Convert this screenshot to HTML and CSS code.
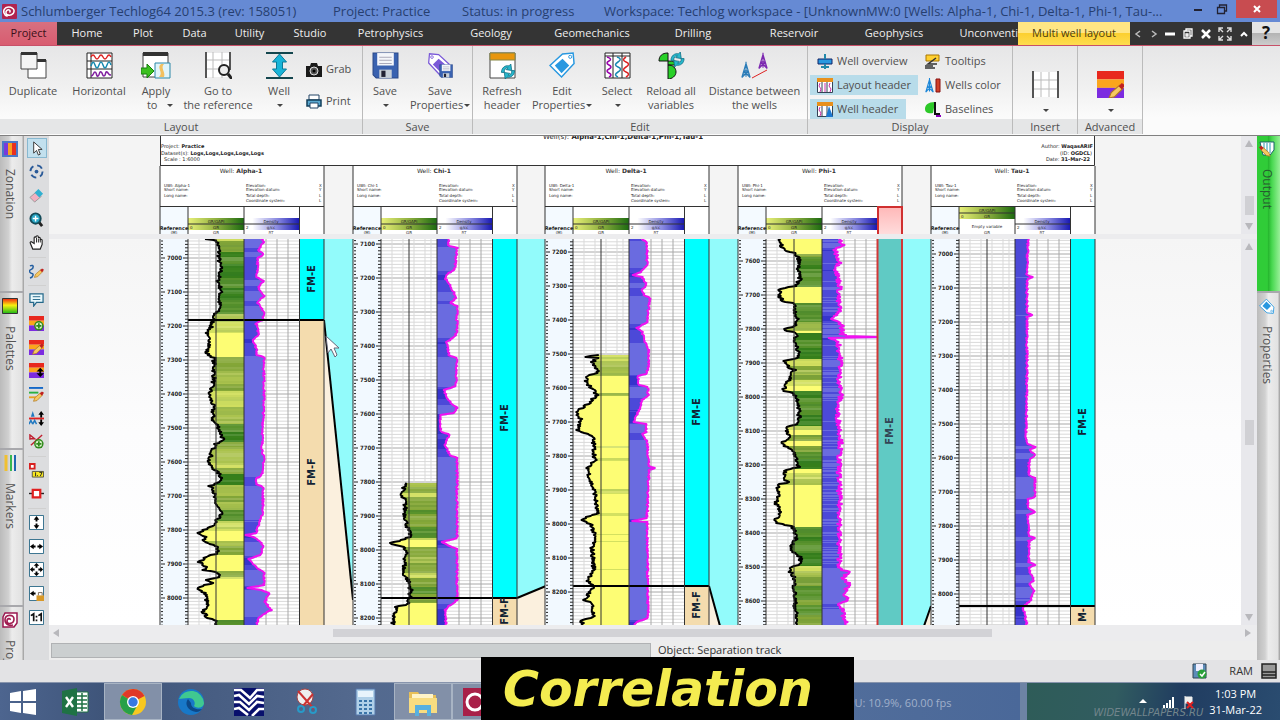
FILE: index.html
```html
<!DOCTYPE html>
<html lang="en">
<head>
<meta charset="utf-8">
<title>Techlog - Multi well layout</title>
<link rel="stylesheet" href="styles.css">
</head>
<body>
<svg class="defs" aria-hidden="true">
  <symbol id="zones" viewBox="0 0 16 16"><path d="M0 0h16v5H0z" fill="#e8281e"/><path d="M0 5h16v5H0z" fill="#fba51c"/><path d="M0 10h16v6H0z" fill="#7c2be0"/></symbol>
  <symbol id="pencil" viewBox="0 0 16 16"><path d="M1 15l2-5 8-7 3 3-8 8z" fill="#f6c860" stroke="#b07820"/><path d="M10 4l3-3 3 2-3 4z" fill="#c02020"/></symbol>
  <symbol id="plus" viewBox="0 0 12 12"><circle cx="6" cy="6" r="5.5" fill="#2f8a1c"/><circle cx="6" cy="6" r="3.8" fill="#d8f0c8"/><path d="M6 3v6M3 6h6" stroke="#2f8a1c" stroke-width="2"/></symbol>
  <symbol id="sync" viewBox="0 0 16 16"><path d="M1 9c0-5 4-8 8-7l2-2 1 7-6-1 2-2C5 4 4 6 4 9zM15 7c0 5-4 8-8 7l-2 2-1-7 6 1-2 2c3 0 4-2 4-5z" fill="#28b8cc" stroke="#0a6a80" stroke-width=".8"/></symbol>
  <symbol id="disk" viewBox="0 0 26 26"><path d="M1 1h24v24H4l-3-3z" fill="#3a62b0" stroke="#2a4888"/><path d="M5 1h16v12H5z" fill="#f4f6fa"/><path d="M7 5h12M7 8h12M7 11h12" stroke="#aab"/><path d="M7 17h12v8H7z" fill="#c8d0d8"/><path d="M9 18h4v6H9z" fill="#223"/></symbol>
  <symbol id="tag" viewBox="0 0 28 28"><path d="M1 14L14 2l11-1 1 11-13 14z" fill="#fff" stroke="currentColor" stroke-width="1.5"/><path d="M6 14l8-7 7 7-8 8z" fill="currentColor"/><circle cx="22" cy="5" r="1.6" fill="none" stroke="currentColor"/></symbol>
  <symbol id="derrick" viewBox="0 0 12 20"><path d="M6 0v18M6 2L1 19M6 2l5 17M3 11h6M2 15h8M4 7h4M1 19l8-8M11 19l-8-8" stroke="currentColor" stroke-width="1.4" fill="none"/></symbol>
  <symbol id="spiral" viewBox="0 0 16 16"><path d="M1 5L3 1h12v10l-3 4H1z" fill="#fff" stroke="#9a1850" stroke-width="1.5"/><path d="M8 8c1-2-3-2-3 1 0 4 7 3 7-2 0-5-9-5-9 1 0 5 5 6 8 5" fill="none" stroke="#a01c50" stroke-width="1.6"/></symbol>
  <symbol id="fit" viewBox="0 0 16 16"><path d="M.5.5h15v15H.5z" fill="#fff" stroke="#2c6a88"/></symbol>
</svg>

<div class="app">
  <header class="titlebar">
    <svg class="logo" viewBox="0 0 16 16"><rect width="16" height="16" rx="1" fill="#b02450"/><path d="M8 9c2-2-1-4-3-2-3 4 3 7 7 3 3-5-3-8-8-6-4 3-2 8 2 9" fill="none" stroke="#fff" stroke-width="1.6"/></svg>
    <span class="t-app">Schlumberger Techlog64 2015.3 (rev: 158051)</span>
    <span class="t-project">Project: Practice</span>
    <span class="t-status">Status: in progress</span>
    <span class="t-work">Workspace: Techlog workspace - [UnknownMW:0 [Wells: Alpha-1, Chi-1, Delta-1, Phi-1, Tau-...</span>
    <div class="winbtns">
      <button aria-label="Minimize"><svg width="12" height="12"><path d="M2 7h8" stroke="#223" stroke-width="2"/></svg></button>
      <button aria-label="Restore"><svg width="12" height="12"><path d="M1.500 4.500h7v6h-7zM3.500 4v-2h7v6h-2" fill="none" stroke="#223" stroke-width="1.300"/></svg></button>
      <button class="close" aria-label="Close"><svg width="10" height="10"><path d="M2 2l6 6M8 2L2 8" stroke="#fff" stroke-width="2"/></svg></button>
    </div>
  </header>

  <nav class="menu">
    <button class="project">Project</button><button>Home</button><button>Plot</button><button>Data</button><button>Utility</button><button>Studio</button><button>Petrophysics</button><button>Geology</button><button>Geomechanics</button><button>Drilling</button><button>Reservoir</button><button>Geophysics</button><button class="cut">Unconventi</button><button class="current">Multi well layout</button>
    <div class="mdi">
      <button aria-label="Previous tab"><svg width="8" height="10"><path d="M6 2L2 5l4 3" stroke="#bbb" stroke-width="1.500" fill="none"/></svg></button>
      <button aria-label="Next tab"><svg width="8" height="10"><path d="M2 2l4 3-4 3" stroke="#bbb" stroke-width="1.500" fill="none"/></svg></button>
      <button aria-label="Minimize view"><svg width="10" height="10"><path d="M0 5h10" stroke="#fff" stroke-width="3"/></svg></button>
      <button aria-label="Restore view"><svg width="10" height="11"><path d="M1 3h6v7H1zM3 3V1h6v7H7M3 6h2v2H3z" stroke="#fff" stroke-width="1.300" fill="none"/></svg></button>
      <button aria-label="Close view"><svg width="10" height="10"><path d="M1 1l8 8M9 1L1 9" stroke="#fff" stroke-width="2.500"/></svg></button>
      <button aria-label="Full screen"><svg width="14" height="14"><path d="M1 5V1h4M1 1l4 4M9 1h4v4M13 1L9 5M1 9v4h4M1 13l4-4M13 9v4H9M13 13L9 9" stroke="#ddd" stroke-width="1.400" fill="none"/></svg></button>
      <button aria-label="Collapse ribbon"><svg width="8" height="8"><path d="M1 6l3-3 3 3" stroke="#fff" stroke-width="2" fill="none"/></svg></button>
    </div>
    <button class="help" aria-label="Help">?</button>
  </nav>

  <section class="ribbon">
    <div class="group"><div class="tools g-layout">
      <button><svg viewBox="0 0 27 27"><path d="M8 8h18v18H8z" fill="#fff" stroke="#444"/><path d="M8 7h18v3H8z" fill="#333"/><path d="M1 1h16v16H1z" fill="#f4f4f4" stroke="#444"/><path d="M1 0h16v3H1z" fill="#333"/></svg>Duplicate</button>
      <button><svg viewBox="0 0 27 27"><path d="M1 1h25v25H1zM5 1v25M1 9h25M1 17h25" fill="#fff" stroke="#222"/><path d="M5 5q2-4 4 0t4 0 4 0 4 0 4 0" fill="none" stroke="#d22" stroke-width="1.400"/><path d="M5 14q2-7 4-1t4 0 4 0 4 0 4 0" fill="none" stroke="#178ab0" stroke-width="1.500"/><path d="M5 24c3 0 2-4 4-4s1 5 3 4 1-5 3-4 1 4 3 4 1-5 3-4 1 3 4 3" fill="none" stroke="#8020a0" stroke-width="1.500"/></svg>Horizontal</button>
      <button><svg viewBox="0 0 30 27"><path d="M2 1h25v24H2z" fill="#fff" stroke="#444"/><path d="M2 0h25v4H2z" fill="#333"/><path d="M14 11h15v15H14z" fill="#e0f4fa" stroke="#2c88a8"/><path d="M20 12c-5 4 3 8-2 13h5c2-5-4-9 0-13z" fill="#f2c060"/><path d="M0 16h6v-4l7 7-7 7v-4H0z" fill="#3cc020" stroke="#188010"/></svg>Apply<br><span class="shift">to &nbsp; <i></i></span></button>
      <button><svg viewBox="0 0 27 27"><path d="M1 1h24v24H1z" fill="#fff"/><path d="M8 0v26M17 0v26M1 8h25M1 17h25" stroke="#bbb"/><path d="M1 0v26M25 0v18" stroke="#555" stroke-width="2"/><circle cx="19" cy="18" r="5" fill="#eee" stroke="#222" stroke-width="2"/><path d="M23 22l4 5" stroke="#222" stroke-width="3"/></svg>Go to<br>the reference</button>
      <button><svg viewBox="0 0 27 27"><path d="M0 1h27M0 26h27" stroke="#14464e" stroke-width="2"/><path d="M13.500 2l7 8h-4v7h4l-7 8-7-8h4v-7h-4z" fill="#18b4d8" stroke="#0a7a98"/></svg>Well<br><span><i></i></span></button>
      <div class="stack2">
        <button><svg viewBox="0 0 16 15"><path d="M0 4h4l1-3h6l1 3h4v11H0z" fill="#1a1a1a"/><circle cx="8" cy="9" r="4" fill="#555" stroke="#ddd"/><circle cx="8" cy="9" r="1.500"/></svg>Grab</button>
        <button><svg viewBox="0 0 16 15"><path d="M3 1h10v5H3z" fill="#fff" stroke="#246"/><path d="M1 6h14v6H1z" fill="#5aa8d0" stroke="#123e5a" stroke-width="1.500"/><path d="M4 9h8v5H4z" fill="#fff" stroke="#246"/></svg>Print</button>
      </div>
    </div><h2>Layout</h2></div>
    <div class="group"><div class="tools g-save">
      <button><svg><use href="#disk"/></svg>Save<br><span><i></i></span></button>
      <button><svg viewBox="0 0 29 27"><use href="#tag" width="25" height="25" color="#7a58d8" transform="matrix(-1 0 0 1 25 0)"/><use href="#disk" x="13" y="12" width="15" height="15"/></svg>Save<br><span>Properties<i></i></span></button>
    </div><h2>Save</h2></div>
    <div class="group"><div class="tools g-edit">
      <button><svg viewBox="0 0 27 27"><path d="M1 1h25v25H1z" fill="#fff" stroke="#444"/><path d="M1 1h25v7H1z" fill="#e8960c" stroke="#884"/><use href="#sync" x="11" y="12" width="16" height="15"/></svg>Refresh<br>header</button>
      <button class="blue"><svg><use href="#tag"/></svg>Edit<br><span>Properties<i></i></span></button>
      <button><svg viewBox="0 0 27 27"><path d="M1 1h25v25H1zM1 4h25M9 1v25M18 1v25" fill="#fff" stroke="#222"/><g fill="none" stroke-width="1.500"><path d="M3 5q6 2 2 4t0 4 0 4 0 4 0 4" stroke="#90a"/><path d="M13 5q6 2 1 5t0 5 0 5 0 5" stroke="#178ab0"/><path d="M22 5q-5 3 0 5t0 5 0 5 0 5" stroke="#d22"/></g></svg>Select<br><span><i></i></span></button>
      <button><svg viewBox="0 0 27 27"><path d="M10 1C4 1 1 4 1 9h9zM10 9v4h8c0-3-3-4-8-4zM10 13c5 0 8 3 8 7s-4 7-8 7z" fill="#28d028" stroke="#111"/><use href="#sync" x="11" y="0" width="17" height="15"/></svg>Reload all<br>variables</button>
      <button><svg viewBox="0 0 27 27"><use href="#derrick" x="0" y="9" width="10" height="18" color="#2a7cb8"/><use href="#derrick" x="17" y="0" width="10" height="18" color="#7c28b0"/><path d="M11 26l15-8" stroke="#d22"/></svg>Distance between<br>the wells</button>
    </div><h2>Edit</h2></div>
    <div class="group"><div class="tools g-display">
      <button><svg viewBox="0 0 16 15"><path d="M1 5h14v5H1z" fill="#2898e0" stroke="#126"/><path d="M8 0v5M8 10v5M4 13h8" stroke="#28a" stroke-width="2"/></svg>Well overview</button>
      <button><svg viewBox="0 0 16 15"><path d="M1 1h13v6H1z" fill="#ffd030" stroke="#a70"/><path d="M11 4L3 10h9M0 12h8M0 14h10" stroke="#333" fill="none" stroke-width="1.500"/></svg>Tooltips</button>
      <button class="on"><svg viewBox="0 0 16 15"><path d="M.5.500h15v14H.5zM5 4v11M10 4v11" fill="#fff" stroke="#345"/><path d="M0 0h16v4H0z" fill="#e8901c"/><path d="M3 5l-1 3 2 3-1 3M8 5v9M13 5l-1 3 2 3-1 3" stroke="#c3a" fill="none"/></svg>Layout header</button>
      <button><svg viewBox="0 0 16 15"><use href="#derrick" width="9" height="15" color="#1b86d8"/><path d="M11 1h4v13h-4z" fill="#d04028" stroke="#811"/></svg>Wells color</button>
      <button class="on w2"><svg viewBox="0 0 16 15"><path d="M.5.500h15v14H.5zM5 4v11M10 4v11" fill="#fff" stroke="#345"/><path d="M0 0h16v4H0z" fill="#e8901c"/><path d="M3 5l-1 3 2 3-1 3" stroke="#c3a" fill="none"/><path d="M12 4l4 11H9z" fill="#1b78d0"/></svg>Well header</button>
      <button><svg viewBox="0 0 16 15"><path d="M10 0C3 0 0 3 0 7s4 5 8 4z" fill="#2cc828"/><path d="M10 0v12h5" stroke="#111" stroke-width="2" fill="none"/><path d="M11 13h5v2h-5z" fill="#80b"/></svg>Baselines</button>
    </div><h2>Display</h2></div>
    <div class="group"><div class="tools g-one"><button aria-label="Insert track"><svg viewBox="0 0 27 27"><path d="M1 1h25v25H1z" fill="#fff"/><path d="M9 1v25M17 1v25M1 9h25M1 18h25" stroke="#bbb"/><path d="M1 0v27M26 0v27" stroke="#555" stroke-width="2"/></svg><span><i></i></span></button></div><h2>Insert</h2></div>
    <div class="group"><div class="tools g-one"><button aria-label="Advanced zones"><svg viewBox="0 0 27 27"><use href="#zones" width="27" height="27"/><use href="#pencil" x="11" y="11" width="17" height="17"/></svg><span><i></i></span></button></div><h2>Advanced</h2></div>
  </section>

  <main class="work">
    <aside class="tabs left">
      <button><svg viewBox="0 0 16 16"><path d="M0 0h16v16H0z" fill="#4a78c8"/><path d="M2 2h12v12H2z" fill="#fff"/><path d="M2 2h4v12H2z" fill="#7a3ad8"/><path d="M6 2h4v12H6z" fill="#f8a020"/><path d="M10 2h4v12h-4z" fill="#e83020"/></svg>Zonation</button>
      <button><svg viewBox="0 0 16 16"><defs><linearGradient id="pal" x2="0" y2="1"><stop stop-color="#f02010"/><stop offset=".45" stop-color="#f8f010"/><stop offset="1" stop-color="#18b818"/></linearGradient></defs><path d="M.5.500h15v15H.5z" fill="url(#pal)" stroke="#333"/></svg>Palettes</button>
      <button><svg viewBox="0 0 16 16"><path d="M4 0v16" stroke="#f0c030" stroke-width="3"/><path d="M9 0v16" stroke="#38b850" stroke-width="2"/><path d="M13 0v16" stroke="#2068b0" stroke-width="2"/></svg>Markers</button>
      <button class="rest"><svg><use href="#spiral"/></svg>Proj</button>
    </aside>

    <div class="toolbar" role="toolbar">
      <button class="active" aria-label="Select"><svg viewBox="0 0 16 16"><path d="M5 1v12l3-3 2 5 2-1-2-5h4z" fill="#fff" stroke="#333"/></svg></button>
      <button aria-label="Target"><svg viewBox="0 0 16 16"><circle cx="8" cy="8" r="6.500" fill="none" stroke="#2a5a98" stroke-width="2" stroke-dasharray="6 4.200"/><circle cx="8" cy="8" r="2" fill="#2a5a98"/></svg></button>
      <button aria-label="Erase"><svg viewBox="0 0 16 16"><path d="M1 10l7-6 5 5-7 6z" fill="#f0b0c0" stroke="#999"/><path d="M6 5l4-4 5 5-4 4z" fill="#30b0d0"/></svg></button>
      <button aria-label="Zoom"><svg viewBox="0 0 16 16"><path d="M10 10l4 5" stroke="#222" stroke-width="3"/><circle cx="7" cy="7" r="5.500" fill="#28a8c8" stroke="#134a58" stroke-width="2"/><path d="M7 4v6M4 7h6" stroke="#fff" stroke-width="1.500"/></svg></button>
      <button aria-label="Pan"><svg viewBox="0 0 16 16"><path d="M4 15h8l2-5V5.500a1 1 0 0 0-2 0V3.500a1 1 0 0 0-2 0V2a1 1 0 0 0-2.500 0V3a1 1 0 0 0-2 0v6L3 7.500a1 1 0 0 0-1.500 1.500z" fill="#fff" stroke="#222" stroke-width="1.200"/><path d="M8 3v5M10 4v4M12 5v3" stroke="#222"/></svg></button>
      <hr>
      <button aria-label="Edit curve"><svg viewBox="0 0 16 16"><path d="M1 2c5-2 4 3 1 4s-1 4 1 4 2 4-2 5" fill="none" stroke="#235ea0" stroke-width="1.600"/><use href="#pencil" x="5" y="4" width="11" height="11"/></svg></button>
      <hr>
      <button aria-label="Comment"><svg viewBox="0 0 16 16"><path d="M1 2h14v9H8l-3 4v-4H1z" fill="#e8f8fc" stroke="#24688a" stroke-width="1.300"/><path d="M4 5h8M4 8h8" stroke="#24688a"/></svg></button>
      <button aria-label="Add zone"><svg viewBox="0 0 16 16"><use href="#zones"/><use href="#plus" x="5" y="5" width="11" height="11"/></svg></button>
      <button aria-label="Edit zone"><svg viewBox="0 0 16 16"><use href="#zones"/><use href="#pencil" x="3" y="3" width="13" height="13"/></svg></button>
      <button aria-label="Move zone"><svg viewBox="0 0 16 16"><use href="#zones"/><path d="M12 5l4 4h-3v2h3l-4 4-4-4h3V9H8z"/></svg></button>
      <button aria-label="Edit markers"><svg viewBox="0 0 16 16"><path d="M0 1h15" stroke="#1468c8" stroke-width="2"/><path d="M0 6h10" stroke="#28b040" stroke-width="2"/><path d="M0 11h8" stroke="#e8a020" stroke-width="2"/><use href="#pencil" x="4" y="4" width="12" height="12"/></svg></button>
      <button aria-label="Flatten"><svg viewBox="0 0 16 16"><path d="M0 8h16" stroke="#e02020" stroke-width="2"/><path d="M4 0l2 6H2z" fill="#2078c0"/><path d="M0 14l2-4 2 4M4 14l2-4 2 4" fill="none" stroke="#2078c0" stroke-width="1.500"/><path d="M10 4l3-4 3 4h-2v3h-2V4zM10 12l3 4 3-4h-2v-3h-2v3z"/></svg></button>
      <button aria-label="Add fault"><svg viewBox="0 0 16 16"><path d="M1 6V1l5 4H1M2 12L14 1" stroke="#c02030" stroke-width="1.500" fill="none"/><use href="#plus" x="5" y="5" width="11" height="11"/></svg></button>
      <hr>
      <button aria-label="Show value"><svg viewBox="0 0 16 16"><path d="M1 1h5v5H1z" fill="#fff" stroke="#d82020" stroke-width="2"/><path d="M3.500 9h12v6h-12z" fill="#f8e820" stroke="#554"/><path d="M7 10v4M9 13v1M11 10h3l-2 4" stroke="#222" fill="none"/></svg></button>
      <button aria-label="Node"><svg viewBox="0 0 16 16"><path d="M0 8h16" stroke="#222" stroke-width="1.500"/><path d="M4 4h8v8H4z" fill="#fff" stroke="#e02020" stroke-width="2.400"/></svg></button>
      <hr>
      <button aria-label="Fit height"><svg viewBox="0 0 16 16"><use href="#fit"/><path d="M8 1l3 4H9v2H7V5H5zM8 15l3-4H9V9H7v2H5z"/></svg></button>
      <button aria-label="Fit width"><svg viewBox="0 0 16 16"><use href="#fit"/><path d="M1 8l4-3v2h2v2H5v2zM15 8l-4-3v2H9v2h2v2z"/></svg></button>
      <button aria-label="Fit all"><svg viewBox="0 0 16 16"><use href="#fit"/><path d="M8 1l3 3H9v2H7V4H5zM8 15l3-3H9v-2H7v2H5zM1 8l3-3v2h2v2H4v2zM15 8l-3-3v2h-2v2h2v2z"/></svg></button>
      <button aria-label="Lock fit"><svg viewBox="0 0 16 16"><use href="#fit"/><path d="M1 8l4-3v2h2v2H5v2z"/><path d="M8 10h8v6H8z" fill="#d89828"/><path d="M10 10V7h4v3" fill="none" stroke="#765"/></svg></button>
      <button aria-label="One to one"><svg viewBox="0 0 16 16"><use href="#fit"/><path d="M2 6l3-2v8M10 6l3-2v8M8 6v2M8 10v2" fill="none" stroke="#111" stroke-width="1.800"/></svg></button>
    </div>

    <div class="view">
      <div class="pane head">
        <svg id="heads" role="img" aria-label="Well headers"></svg>
        <div class="vscroll"><b class="up"></b><b class="thumb"></b><b class="down"></b></div>
      </div>
      <div class="pane plot">
        <svg id="logs" role="img" aria-label="Well logs"></svg>
        <div class="vscroll"><b class="up"></b><b class="thumb"></b><b class="down"></b></div>
      </div>
      <div class="hscroll"><b class="lt"></b><b class="thumb"></b><b class="rt"></b></div>
      <div class="info"><div class="progress"></div><span>Object: Separation track</span></div>
    </div>

    <aside class="tabs right">
      <button class="green"><svg viewBox="0 0 16 16"><path d="M1 1h14v8l-4 5H4z" fill="#fff" stroke="#18606a"/><path d="M5 2v8M8 2v10M11 2v10" stroke="#2898b0"/><use href="#pencil" x="0" y="4" width="12" height="12" transform="matrix(-1 0 0 1 12 0)"/></svg>Output</button>
      <button class="rest blue"><svg viewBox="0 0 28 28"><g transform="matrix(1 0 0 -1 0 28)"><use href="#tag"/></g></svg>Properties</button>
    </aside>
  </main>

  <footer class="status">
    <svg width="16" height="16" viewBox="0 0 16 16"><path d="M1 1h13v14H1z" fill="#5c8cb8" stroke="#345"/><path d="M4 1h7v7H4z" fill="#eef"/><circle cx="10" cy="11" r="4.500" fill="#28a038"/><path d="M8 11l2 2 3-4" stroke="#fff" stroke-width="1.500" fill="none"/></svg>
    <span>RAM</span>
    <svg width="16" height="16" viewBox="0 0 16 16"><path d="M1 1h14v14H1zM1 9h14M1 12h14" fill="#999" stroke="#222" stroke-width="1.500"/></svg>
  </footer>

  <div class="taskbar">
    <div class="apps">
      <button aria-label="Start"><svg viewBox="0 0 28 28"><path d="M1 5l11-2v10H1zM14 3l13-2v12H14zM1 15h11v10L1 23zM14 15h13v12l-13-2z" fill="#fff"/></svg></button>
      <button aria-label="Excel"><svg viewBox="0 0 28 28"><path d="M14 4h13v20H14z" fill="#fff" stroke="#1f7244"/><path d="M16 8h10M16 12h10M16 16h10M16 20h10M21 5v18" stroke="#1f7244" stroke-width="1.500"/><path d="M1 3l15-3v28L1 25z" fill="#1f7244"/><path d="M5 9l7 10M12 9L5 19" stroke="#fff" stroke-width="2.400"/></svg></button>
      <button class="open" aria-label="Chrome"><svg viewBox="0 0 28 28"><circle cx="14" cy="14" r="13" fill="#f8c820"/><path d="M14 14L3 7a13 13 0 0 1 22.500 1z" fill="#e03828"/><path d="M14 14L3 7a13 13 0 0 0 10 20l5-9z" fill="#28a048"/><circle cx="14" cy="14" r="6" fill="#fff"/><circle cx="14" cy="14" r="4.700" fill="#3878e0"/></svg></button>
      <button aria-label="Edge"><svg viewBox="0 0 28 28"><circle cx="14" cy="14" r="13" fill="#1878c8"/><path d="M2 11a13 13 0 0 1 25 4c0 5-7 6-10 3 2-3 0-8-5-8-4 0-8 1-10 1z" fill="#40c890"/><path d="M11 11c-4 5 0 12 8 13 3 0 5-2 6-3-6 1-11-1-11-6z" fill="#0c4888"/></svg></button>
      <button aria-label="Techlog data"><svg viewBox="0 0 30 28"><path d="M0 0h30v28H0z" fill="#08106c"/><path d="M0 2h7l9 8 7-8h7M0 8l5-1 10 9 8-8 7 1M0 14h6l9 8 8-8 7 1M0 21l5-1 9 7M30 21l-5 0-7 7" fill="none" stroke="#fff" stroke-width="2.600"/></svg></button>
      <button aria-label="Snipping tool"><svg viewBox="0 0 28 28"><ellipse cx="12" cy="9" rx="8" ry="8" fill="#eee" stroke="#a44"/><path d="M5 3l16 18M20 6L10 18" stroke="#c33" stroke-width="2"/><circle cx="8" cy="21" r="3" fill="none" stroke="#289ac8" stroke-width="2"/><circle cx="20" cy="22" r="3" fill="none" stroke="#289ac8" stroke-width="2"/></svg></button>
      <button aria-label="Calculator"><svg viewBox="0 0 28 28"><path d="M5 1h19v26H5z" fill="#b0d0e8" stroke="#57a"/><path d="M7 3h15v6H7z" fill="#e8f4fc"/><path d="M8 13h13M8 17h13M8 21h13M8 25h13" stroke="#3a74a8" stroke-width="2" stroke-dasharray="3 2"/></svg></button>
      <button class="open" aria-label="File Explorer"><svg viewBox="0 0 30 28"><path d="M1 4h9l2 3h16v18H1z" fill="#e8c058"/><path d="M4 6h21v12H4z" fill="#fff4c8"/><path d="M1 10h28v15H1z" fill="#f8dc80"/><path d="M7 28V17h16v11h-4v-6h-8v6z" fill="#58b0e0"/></svg></button>
      <button class="open" aria-label="Techlog"><svg viewBox="0 0 28 28"><rect width="28" height="28" fill="#a82048"/><circle cx="12" cy="14" r="8" fill="none" stroke="#fff" stroke-width="3"/></svg></button>
      <span class="fps">CPU: 10.9%, 60.00 fps</span>
    </div>
    <div class="tray">
      <span class="brand">WIDEWALLPAPERS.RU</span>
      <svg width="56" height="16" viewBox="0 0 56 16"><path d="M0 9l4-4 4 4z" fill="#fff"/><path d="M24 14v-3h2v3zM27 14V9h2v5zM30 14V6h2v8zM33 14V3h2v11z" fill="#fff"/><path d="M46 2v13M46 3h7v6h-7" fill="#eee" stroke="#eee"/><path d="M48 8l6 6M54 8l-6 6" stroke="#e02020" stroke-width="2"/></svg>
      <div class="clock"><span>1:03 PM</span><span>31-Mar-22</span></div>
    </div>
  </div>
  <div class="caption">Correlation</div>
</div>
<script src="app.js"></script>
</body>
</html>
```
FILE: styles.css
```css
* { box-sizing: border-box; }
body { margin: 0; font: 11px/14px "Open Sans", "Noto Sans", sans-serif; color: #505050; }
button { font: inherit; color: inherit; background: none; border: 0; padding: 0; margin: 0; }
.defs { position: absolute; width: 0; height: 0; }
.app { position: relative; min-height: 100vh; display: flex; flex-direction: column; overflow: hidden; }

.titlebar { height: 22px; background: #668ad4; color: #263f70; display: flex; align-items: center; font-size: 13px; line-height: 20px; white-space: nowrap; padding-left: 2px; }
.logo { width: 15px; height: 15px; margin-right: 4px; flex: none; }
.t-app { flex: 0 0 312px; }
.t-project { flex: 0 0 129px; }
.t-status { flex: 0 0 142px; }
.winbtns { margin-left: auto; display: flex; align-self: stretch; padding-right: 3px; }
.winbtns button { width: 24px; display: flex; align-items: center; justify-content: center; padding-bottom: 4px; }
.winbtns .close { width: 41px; background: #c84c50; height: 18px; padding: 0; margin-left: 2px; }

.menu { height: 24px; background: #343434; color: #eee; display: grid; grid-template-columns: 57fr 60fr 52fr 51fr 59fr 62fr 99fr 102fr 100fr 102fr 100fr 100fr 74fr 112fr 122px 28px; border-bottom: 1px solid #c85068; }
.menu > button { white-space: nowrap; overflow: hidden; min-width: 0; padding-bottom: 1px; }
.menu .project { background: linear-gradient(#d87080, #d85c70); color: #3a1018; }
.menu .cut { text-align: right; }
.menu .current { background: linear-gradient(#ffe684 50%, #fcd030 50%, #fddc50); color: #4a3c10; }
.mdi { display: flex; align-items: center; justify-content: space-between; padding: 0 4px; }
.mdi button { display: flex; }
.menu .help { background: linear-gradient(#e4e4e4 50%, #b4b4b4 50%, #ccc); color: #111; font-size: 17px; font-weight: 700; line-height: 22px; }

.ribbon { height: 90px; display: grid; grid-template-columns: 363px 110px 335px 205px 65px 65px; background: linear-gradient(#e6e6e7, #f0f0f0 45%, #fbfbfb 80%); border-bottom: 1px solid #808080; }
.group { display: flex; flex-direction: column; border-right: 1px solid #bbb; margin-bottom: 1px; }
.group h2 { margin: 0; font: inherit; line-height: 15px; text-align: center; background: #e5e6e7; }
.tools { height: 73px; display: grid; white-space: nowrap; }
.tools > button { text-align: center; display: flex; flex-direction: column; align-items: center; justify-content: flex-start; padding-top: 6px; }
.tools > button > svg { width: 27px; height: 27px; margin: 0 0 5px; flex: none; }
.tools span { display: block; min-height: 14px; }
.tools .shift { padding-left: 8px; }
i { display: inline-block; border: 3px solid transparent; border-top-color: #444; border-bottom: 0; vertical-align: 2px; margin-left: 1px; }
.blue svg { color: #2898e0; }
.g-layout { grid-template-columns: 66px 66px 48px 76px 46px 60px; }
.g-layout > button:nth-child(3) > svg { width: 30px; }
.g-save { grid-template-columns: 44px 66px; }
.g-edit { grid-template-columns: 58px 62px 48px 60px 107px; }
.stack2 { padding: 8px 0 0 4px; display: flex; flex-direction: column; gap: 2px; }
.stack2 button { height: 30px; display: flex; align-items: center; gap: 4px; }
.stack2 svg, .tools.g-display svg { width: 16px; height: 15px; margin: 0; flex: none; }
.tools.g-display { grid-template-columns: 108px 90px; grid-template-rows: 20px 20px 20px; row-gap: 4px; padding: 5px 0 0 2px; }
.tools.g-display > button { flex-direction: row; align-items: center; gap: 4px; height: 20px; padding: 0 0 0 7px; }
.g-display .on { background: #b8dcea; }
.g-display .w2 { margin-right: 12px; }
.tools.g-one > button { padding-top: 25px; }

.work { flex: 1; display: flex; background: #dcdddf; min-height: 524px; }
.tabs { flex: none; width: 24px; display: flex; flex-direction: column; gap: 2px; background: #a8a8ac; overflow: hidden; font-size: 12px; line-height: 16px; }
.tabs button { writing-mode: vertical-rl; height: 155px; display: flex; align-items: center; justify-content: flex-start; gap: 12px; padding: 5px 6px 0 2px; color: #555; background: linear-gradient(90deg, #bbb, #d0d0d0 35%, #ececec 50%, #e2e2e2 90%, #999); }
.tabs svg { width: 16px; height: 16px; flex: none; }
.tabs .rest { flex: 1; min-height: 0; overflow: hidden; }
.tabs.right { width: 23px; }
.tabs .green { background: linear-gradient(90deg, #30cc38 45%, #28b830 50%, #48d850 65%, #98f098); color: #285a30; }

.toolbar { width: 25px; flex: none; height: 493px; display: flex; flex-direction: column; align-items: center; }
.toolbar button { flex: 1; width: 20px; display: flex; align-items: center; justify-content: center; }
.toolbar .active { background: #c2e0ee; border: 1px solid #88b8d0; flex: 0 0 20px; margin: 2px 0; }
.toolbar svg { width: 15px; height: 15px; }
.toolbar hr { width: 18px; height: 1px; margin: 2px 0; border: 0; background: #d0d0d0; flex: none; }

.view { flex: 1; min-width: 0; display: flex; flex-direction: column; background: #ececee; }
.pane { display: flex; }
.pane > svg { flex: 1; min-width: 0; background: #f4f4f4; }
.head { height: 98px; margin-bottom: 5px; }
.plot { flex: 1; min-height: 386px; }
.plot > svg { background: linear-gradient(#f5f5f5, #fcfcfd 50%, #fff); }
.vscroll { width: 16px; flex: none; display: flex; flex-direction: column; align-items: center; background: #e8e8ec; padding: 4px 0; }
.vscroll .thumb { width: 9px; background: #d0d0d4; }
.head .thumb { height: 19px; margin: auto 0 8px; }
.plot .thumb { height: 25px; margin: auto 0; }
.up, .down, .lt, .rt { border: 4px solid transparent; width: 0; height: 0; }
.up { border-bottom: 7px solid #b8b8bc; border-top: 0; }
.down { border-top: 7px solid #b8b8bc; border-bottom: 0; }
.lt { border-right: 6px solid #b8b8bc; border-left: 0; }
.rt { border-left: 6px solid #b8b8bc; border-right: 0; }
.hscroll { height: 16px; display: grid; grid-template-columns: 4px 280px 659fr 253fr 12px; align-items: center; }
.hscroll .lt { grid-column: 2; }
.hscroll .thumb { height: 8px; background: #d2d2d6; }
.hscroll .rt { grid-column: 5; }
.info { height: 19px; display: flex; align-items: center; gap: 7px; padding: 0 0 1px 2px; color: #333; background: #ededed; }
.progress { width: 600px; height: 15px; background: #cbcfd0; border: 1px solid #b0b2b4; }

.status { height: 22px; flex: none; background: #e3e3e5; display: flex; align-items: center; justify-content: flex-end; padding-right: 3px; color: #333; }
.status span { margin: 0 8px 0 21px; }

.taskbar { height: 38px; flex: none; display: grid; grid-template-columns: 1027fr 253fr; border-top: 1px solid #8794ac; background: #3f6070; }
.apps { display: flex; align-items: stretch; background: linear-gradient(90deg, #4d658f, #3f557a 10%, #53698e 35%, #56719c 70%, #4a6899); border-right: 7px solid #6d83a4; min-width: 0; overflow: hidden; }
.apps button { flex: 0 0 58px; display: flex; align-items: center; justify-content: center; border: 1px solid transparent; }
.apps button:first-child { flex-basis: 46px; }
.apps button:last-of-type { flex-basis: 50px; }
.apps .open { background: #8290a8; border-color: #a8b4c4; }
.apps svg { width: 30px; height: 28px; }
.fps { margin-left: 339px; align-self: center; color: #a0b0ca; white-space: nowrap; padding-top: 2px; }
.tray { min-width: 0; display: flex; align-items: center; justify-content: flex-end; gap: 4px; padding-right: 18px; color: #fff; background: linear-gradient(100deg, #2e5c58, #315c60 35%, #203c60 60%, #2a4c70); }
.brand { font: italic 10px/10px "DejaVu Sans", sans-serif; color: #72858c; align-self: flex-end; margin: 0 -68px 2px 0; }
.clock { display: flex; flex-direction: column; align-items: center; line-height: 16px; padding-left: 10px; }
.caption { position: absolute; left: 481px; bottom: 0; width: 373px; height: 63px; background: #000; color: #f4ec50; font: italic bold 49px/66px "DejaVu Sans", Verdana, sans-serif; padding-left: 22px; }

/* log drawing */
.frame { stroke: #333; stroke-width: 1; fill: none; }
.tiny { font: 5px "DejaVu Sans", sans-serif; fill: #222; }
.small { font: 4px "DejaVu Sans", sans-serif; fill: #222; }
.tiny.b { font-weight: bold; }
.name { font: 6px "DejaVu Sans", sans-serif; fill: #333; }
.big { font: 7px "DejaVu Sans", sans-serif; fill: #222; }
.bold { font-weight: bold; }
.depth { font: bold 6px "DejaVu Sans Condensed", "DejaVu Sans", sans-serif; fill: #222; text-anchor: end; }
.fm { font: bold 11px "DejaVu Sans Condensed", "DejaVu Sans", sans-serif; fill: #123; text-anchor: middle; }
.fm.dim { fill: #345; }
.fine { stroke: #d9d9d9; stroke-width: 1; }
.major { stroke: #a8a8a8; stroke-width: 1; }
.gr { stroke: #000; stroke-width: 2; fill: none; stroke-linejoin: round; }
.den { stroke: #f010f0; stroke-width: 2; fill: none; stroke-linejoin: round; }
.marker { stroke: #000; stroke-width: 2; fill: none; }
```
FILE: app.js
```javascript
const GREEN = { y: '#fdfd74', l: '#d3e060', o: '#aac24c', m: '#86a838', g: '#58922a', d: '#37801a' };

const wells = [
  { name: 'Alpha-1', x: 160, first: 7000, y0: 258, top: 320,
    fm: [[279, 'FM-E'], [472, 'FM-F']],
    gr: [[239,207],[241,217],[250,219],[260,219],[270,221],[280,218],[290,221],[300,219],[308,220],[315,214],[325,212],[335,206],[342,211],[353,206],[358,214],[370,214],[380,214],[395,209],[405,213],[421,213],[426,218],[439,223],[444,216],[450,213],[463,208],[468,213],[474,219],[480,223],[486,210],[488,214],[500,214],[513,221],[520,217],[527,211],[533,197],[537,205],[541,203],[546,216],[553,218],[557,207],[562,199],[568,208],[570,202],[572,217],[577,219],[580,205],[583,215],[585,205],[589,197],[594,206],[605,207],[612,203],[618,208],[622,217],[625,217]],
    bands: '239l 241m 252d 257g 264d 278g 288d 300g 314o 322l 333y 357m 371o 384m 391l 407o 424g 432d 442m 447o 463l 468m 474d 485o 496m 502o 510g 521l 531y 541o 546m 555y 571m 577l 579y 620g',
    den: [[239,17],[242,20],[250,14],[254,20],[258,14],[277,13],[281,20],[287,14],[292,17],[296,20],[302,13],[308,17],[312,20],[320,19],[323,12],[335,15],[340,9],[350,13],[355,13],[357,20],[400,20],[448,18],[460,20],[475,18],[478,13],[484,12],[487,19],[505,19],[515,18],[533,12],[535,2],[538,12],[545,19],[555,17],[559,4],[565,10],[569,14],[572,20],[585,20],[588,3],[590,18],[593,25],[602,21],[610,27],[614,20],[618,14],[625,13]] },
  { name: 'Chi-1', x: 353, first: 7100, y0: 244, top: 598,
    fm: [[418, 'FM-E'], [611, 'FM-F']],
    gr: [[483,407],[488,404],[495,400],[500,405],[515,405],[530,408],[536,411],[540,402],[543,390],[547,403],[552,406],[562,405],[573,403],[580,408],[590,411],[600,409],[604,408],[607,396],[612,395],[620,393],[625,393]],
    bands: '483o 487m 493l 497m 510g 514m 527g 538l 540y 547m 557o 563m 573l 578m 587g 594m 603y',
    den: [[239,11],[246,12],[248,20],[269,18],[273,12],[278,8],[285,13],[298,19],[303,13],[306,20],[330,20],[336,18],[342,10],[355,12],[358,20],[386,19],[390,7],[400,11],[408,20],[413,16],[415,3],[432,4],[434,12],[440,10],[445,8],[455,13],[458,20],[538,20],[542,5],[546,12],[549,20],[600,20],[606,12],[610,8],[625,9]] },
  { name: 'Delta-1', x: 545, first: 7200, y0: 252, top: 586,
    fm: [[412, 'FM-E'], [605, 'FM-F']],
    gr: [[355,599],[357,585],[358,597],[362,593],[372,598],[377,585],[384,588],[395,597],[404,588],[412,576],[420,581],[430,578],[437,593],[460,595],[467,588],[480,590],[493,595],[513,597],[520,581],[525,592],[540,595],[547,592],[570,594],[581,588],[587,593],[600,585],[603,592],[617,593],[620,581],[625,583]],
    bands: '355l 361o 376y 393o 396y 446l 448y 458l 461y 489l 494y 513l 516y 534l 535y 541l 542y 569l 570y',
    den: [[239,13],[242,18],[266,18],[272,12],[275,3],[277,13],[285,18],[290,13],[295,15],[298,21],[322,18],[328,8],[332,13],[345,17],[350,20],[368,19],[374,17],[376,9],[385,10],[387,19],[396,19],[400,13],[408,11],[422,5],[424,17],[432,17],[434,13],[441,18],[466,20],[468,25],[470,20],[518,18],[521,4],[522,18],[618,19],[622,8],[625,5]] },
  { name: 'Phi-1', x: 738, first: 7600, y0: 261, top: null, selected: true, rough: 5,
    fm: [[431, 'FM-E']],
    gr: [[239,779],[241,778],[251,785],[253,794],[259,799],[270,798],[280,800],[286,795],[289,780],[297,779],[302,785],[303,794],[320,797],[326,795],[330,783],[332,794],[336,798],[340,793],[347,798],[358,798],[361,784],[367,788],[370,794],[387,785],[391,783],[393,794],[403,799],[423,799],[428,786],[437,790],[443,781],[452,794],[467,799],[470,785],[478,783],[482,789],[485,777],[493,779],[503,776],[510,780],[523,775],[526,792],[537,797],[550,790],[557,800],[564,801],[568,788],[577,794],[603,795],[625,797]],
    bands: '239y 254m 257g 265d 269g 287y 303g 322o 331y 333d 340g 348d 359l 366m 370o 375m 380l 386y 391d 398g 415d 426l 430y 435m 441y 446m 452g 459d 469y 473l 479o 485y 527g 537d 541g 553d 566l 571o 577m 586g 600m 605g 615m',
    den: [[239,18],[245,20],[250,13],[262,18],[270,14],[286,18],[300,16],[310,18],[318,10],[325,20],[334,20],[336,24],[337,55],[338,8],[341,16],[365,19],[375,17],[395,19],[410,15],[440,19],[460,17],[480,17],[520,18],[535,17],[570,18],[572,28],[578,20],[585,28],[592,22],[600,26],[604,18],[625,24]] },
  { name: 'Tau-1', x: 931, first: 7000, y0: 254, top: 606,
    fm: [[422, 'FM-E'], [615, 'M-']],
    gr: null, bands: '',
    den: [[239,13],[275,12],[277,17],[279,12],[313,12],[315,17],[317,12],[370,12],[440,11],[444,13],[447,20],[450,14],[455,20],[460,14],[475,14],[478,20],[497,20],[499,13],[508,13],[512,20],[515,13],[536,14],[538,20],[541,14],[562,14],[565,20],[568,13],[580,19],[585,14],[590,19],[600,16],[607,8],[625,12]] }
];

// Repeatable pseudo random numbers for the fine texture of the curves.
let seed = 7;
const rnd = () => (seed = (seed * 16807) % 2147483647) / 2147483647 - 0.5;

const rect = (x, y, w, h, fill, extra = '') => `<rect x="${x}" y="${y}" width="${w}" height="${h}" fill="${fill}" ${extra}/>`;
const line = (x1, y1, x2, y2, cls) => `<path d="M${x1} ${y1}L${x2} ${y2}" class="${cls}"/>`;
const text = (x, y, s, cls, extra = '') => `<text x="${x}" y="${y}" class="${cls}" ${extra}>${s}</text>`;
const poly = (pts, fill) => `<polygon points="${pts}" fill="${fill}"/>`;

function sample(points, jitter) {
  const out = [];
  for (let i = 0; i < points.length - 1; i++) {
    const [ya, va] = points[i], [yb, vb] = points[i + 1];
    for (let y = ya; y < yb; y++) out.push([y, va + (vb - va) * (y - ya) / (yb - ya) + rnd() * jitter]);
  }
  out.push(points[points.length - 1]);
  return out;
}
const path = pts => 'M' + pts.map(([y, v]) => v.toFixed(1) + ' ' + y).join('L');

function drawHeads() {
  const T = 'text-anchor="middle"', E = 'text-anchor="end"';
  let s = `<defs>
    <linearGradient id="gg"><stop stop-color="#e8f078"/><stop offset=".5" stop-color="#90b040"/><stop offset="1" stop-color="#1c6a10"/></linearGradient>
    <linearGradient id="bb"><stop offset=".15" stop-color="#fff"/><stop offset=".6" stop-color="#8888e0"/><stop offset="1" stop-color="#1414b0"/></linearGradient>
    <linearGradient id="pk" x2="0" y2="1"><stop stop-color="#ffb8b8"/><stop offset="1" stop-color="#ffe0e0"/></linearGradient></defs>
    <g transform="translate(-49 -136)">` + rect(160, 136, 934, 30, '#fff');
  s += text(543, 139, 'Well(s): <tspan class="bold">Alpha-1,Chi-1,Delta-1,Phi-1,Tau-1</tspan>', 'big');
  s += text(161, 148, 'Project: <tspan class="bold">Practice</tspan>', 'tiny') + text(161, 155, 'Dataset(s): <tspan class="bold">Logs,Logs,Logs,Logs,Logs</tspan>', 'tiny') + text(164, 161, 'Scale : 1:6000', 'tiny');
  s += text(1093, 148, 'Author: <tspan class="bold">WaqasARIF</tspan>', 'tiny', E) + text(1092, 155, '(ID: <tspan class="bold">OGDCL</tspan>)', 'tiny', E) + text(1090, 161, 'Date: <tspan class="bold">31-Mar-22</tspan>', 'tiny', E);
  for (const w of wells) {
    const x = w.x;
    s += rect(x, 166, 164, 69, '#fff') + rect(x, 206, 28, 29, '#f4faff');
    s += text(x + 81, 173, `Well: <tspan class="bold">${w.name}</tspan>`, 'name', T);
    s += text(x + 4, 187, 'UWI: ' + w.name, 'small') + text(x + 4, 191, 'Short name:', 'small') + text(x + 4, 197, 'Long name:', 'small');
    s += text(x + 86, 187, 'Elevation:', 'small') + text(x + 86, 191, 'Elevation datum:', 'small') + text(x + 86, 197, 'Total depth:', 'small') + text(x + 86, 202, 'Coordinate system:', 'small');
    s += text(x + 159, 187, 'X', 'small') + text(x + 159, 191, 'Y', 'small') + text(x + 159, 197, 'L', 'small') + text(x + 159, 202, 'L', 'small');
    const gy = w.gr ? 218 : 207;
    s += rect(x + 28, gy, 56, 12, 'url(#gg)') + rect(x + 84, 218, 56, 12, 'url(#bb)');
    s += line(x + 28, gy + 6, x + 84, gy + 6, 'frame') + line(x + 84, 224, x + 140, 224, 'frame');
    s += text(x + 56, gy + 5, 'GR/GAPI', 'small', T) + text(x + 56, gy + 11, 'GR', 'small', T) + text(x + 30, gy + 11, '0', 'small');
    s += text(x + 111, 223, 'Density', 'small', T) + text(x + 111, 229, 'g/cc', 'small', T) + text(x + 86, 229, '2', 'small');
    if (!w.gr) s += text(x + 56, 228, 'Empty variable', 'small', T);
    s += text(x + 14, 230, 'Reference', 'tiny b', T) + text(x + 14, 234, '(M)', 'small', T) + text(x + 56, 234, 'GR', 'small', T) + text(x + 111, 234, 'RT', 'small', T + ' fill-opacity=".8"');
    s += `<path class="frame" d="M${x} 235V166M${x + 164} 235V166M${x} 206.500h164M${x + 28} 206v30M${x + 84} 206v30M${x + 139.5} 206v30"/>`;
    if (w.selected) s += rect(x + 140, 207, 24, 30, 'url(#pk)', 'stroke="#d03030" stroke-width="2"');
  }
  s += `<path class="frame" d="M160 165.500H1094.500V136M160.500 136v30"/></g>`;
  document.getElementById('heads').innerHTML = s;
}

function drawLogs() {
  const top = 239, bottom = 626;
  let s = '<g transform="translate(-49 -239)">';
  for (const [x, w] of [[324, 29], [517, 28], [709, 29], [902, 29]]) s += rect(x, top, w, 387, '#92fbfb');
  s += poly('324,320 353,600 353,626 324,626', '#fbf0de') + line(324, 320, 353, 600, 'marker');
  s += poly('517,598 545,586 545,626 517,626', '#fbf0de') + line(517, 598, 546, 586, 'marker');
  s += poly('709,586 720,626 709,626', '#fbf0de') + line(709, 586, 720, 626, 'marker');
  s += poly('931,606 931,626 924,626', '#fbf0de') + line(931, 606, 924, 626, 'marker');
  for (const w of wells) {
    const x = w.x, t1 = x + 28, t2 = x + 84, z = x + 139.5;
    s += rect(x, top, 28, 387, '#f2f9ff') + rect(t1, top, 112, 387, '#fff');
    for (let k = -8; k < 120; k++) {
      const y = w.y0 + k * 3.4;
      if (y < top || y > bottom) continue;
      s += line(t1, y, z, y, k % 10 ? 'fine' : 'major');
      s += `<path stroke="#222" d="M${x + 1} ${y}h${k % 10 ? 2 : 4}M${t1 - (k % 10 ? 3 : 5)} ${y}h${k % 10 ? 3 : 5}"/>`;
      if (k % 10 === 0 && y < 622) s += text(x + 22, y + 2, w.first + k * 10, 'depth');
    }
    for (const dx of [11, 22, 33, 44, 50]) s += line(t1 + dx, top, t1 + dx, bottom, 'fine');
    for (const dx of [22, 33, 44]) s += line(t2 + dx, top, t2 + dx, bottom, 'major');
    if (w.gr) {
      const c = sample(w.gr, 4), at = new Map(c), bands = w.bands.split(' ').map(b => [parseInt(b, 10), b.slice(-1)]);
      bands.forEach(([y, col], i) => {
        const end = i + 1 < bands.length ? bands[i + 1][0] : bottom;
        let d = `M${t2} ${y}`;
        for (let q = y; q <= Math.min(end, 625); q++) d += `L${(at.get(q) || t1 + 28).toFixed(1)} ${q}`;
        s += `<path d="${d}V${end}H${t2}z" fill="${GREEN[col]}"/>`;
        if (col === 'y') return;
        for (let q = y; q < end - 1; q += 2) {
          s += rect(t1 + 28, q, 28, 2, rnd() > 0 ? '#fff' : '#264', `opacity="${(Math.abs(rnd()) * 0.3).toFixed(2)}"`);
        }
      });
      s += `<path class="gr" d="${path(c)}"/>`;
    }
    s += line(t1 + 28, top, t1 + 28, bottom, 'frame');
    const v = sample(w.den, w.rough || 1.8);
    for (const [y, n] of v) {
      const wide = w.rough ? n - 2 : n;
      const col = wide > 16 ? '#6a6be0' : wide > 10 ? '#4c49d8' : '#3634cc';
      s += rect(t2, y, Math.max(0, n).toFixed(1), 1.2, col);
    }
    s += `<path class="den" d="${path(v.map(([y, n]) => [y, t2 + n]))}"/>`;
    s += rect(z, top, 24.5, 387, w.selected ? '#60cac4' : '#00ffff');
    if (w.top) {
      s += rect(z, w.top, 24.5, bottom - w.top, '#f4dcae') + line(t1, w.top, x + 164, w.top, 'marker');
    }
    s += `<path class="frame" d="M${x} 239V626M${t1} 239V626M${t2} 239V626M${z} 239V626M${x + 164} 239V626"/>`;
    if (w.selected) s += `<path d="M${z} 239V626M${x + 164} 239V626" stroke="#d03838" stroke-width="2"/>`;
    for (const [y, label] of w.fm) s += text(0, 0, label, w.selected ? 'fm dim' : 'fm', `transform="translate(${x + 155} ${y}) rotate(-90)"`);
  }
  s += '<path d="M326 336l2 17 3-4 4 8 2-2-3-7h5z" fill="#fff" stroke="#667"/></g>';
  document.getElementById('logs').innerHTML = s;
}
drawHeads();
drawLogs();
```
